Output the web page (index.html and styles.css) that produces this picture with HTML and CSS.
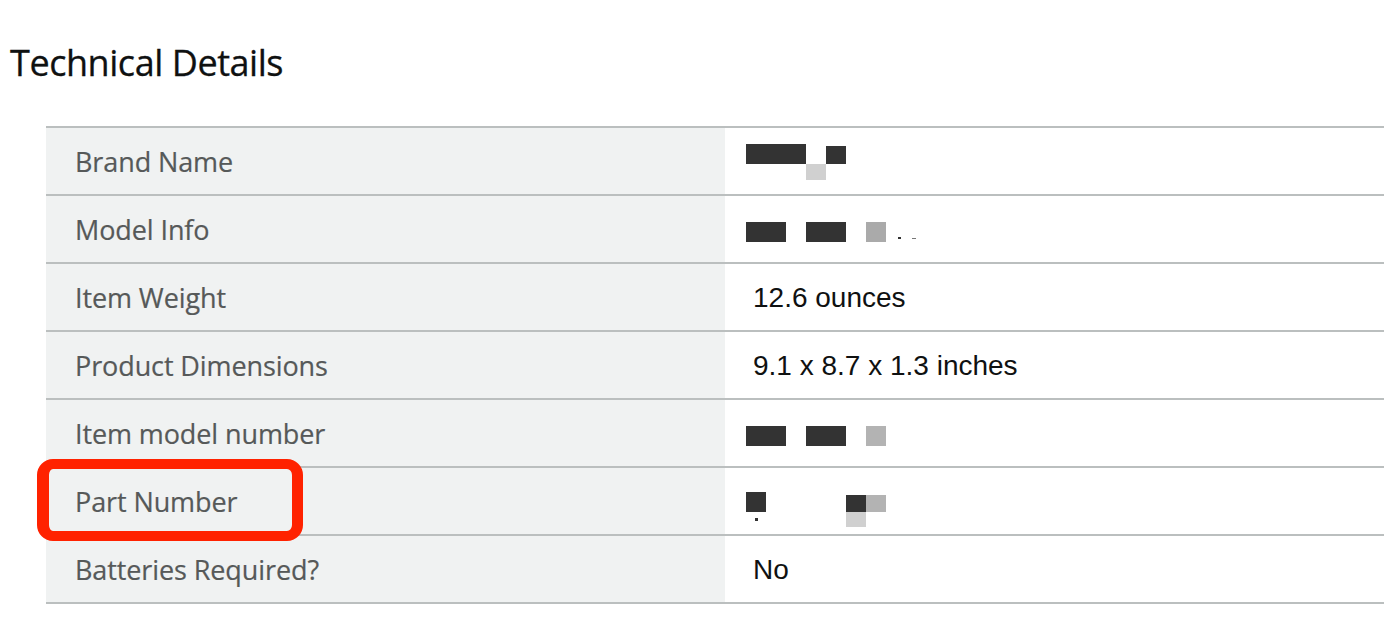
FILE: index.html
```html
<!DOCTYPE html>
<html lang="en">
<head>
<meta charset="utf-8">
<title>Technical Details</title>
<link rel="stylesheet" href="styles.css">
</head>
<body>
<section class="tech">
  <h2 class="tech-title">Technical Details</h2>
  <div class="spec-table">
    <div class="spec-row">
      <div class="spec-label">Brand Name</div>
      <div class="spec-value">
        <div class="redact">
          <span class="blk dark" style="grid-column:1/4;grid-row:1"></span>
          <span class="blk light" style="grid-column:4;grid-row:2"></span>
          <span class="blk dark low" style="grid-column:5;grid-row:1"></span>
        </div>
      </div>
    </div>
    <div class="spec-row">
      <div class="spec-label">Model Info</div>
      <div class="spec-value">
        <div class="redact one">
          <span class="blk dark" style="grid-column:1/3;grid-row:1"></span>
          <span class="blk dark" style="grid-column:4/6;grid-row:1"></span>
          <span class="blk mid" style="grid-column:7;grid-row:1"></span>
          <span class="dots" style="grid-column:8/10;grid-row:1"><i></i><i></i></span>
        </div>
      </div>
    </div>
    <div class="spec-row">
      <div class="spec-label">Item Weight</div>
      <div class="spec-value text">12.6 ounces</div>
    </div>
    <div class="spec-row">
      <div class="spec-label">Product Dimensions</div>
      <div class="spec-value text">9.1 x 8.7 x 1.3 inches</div>
    </div>
    <div class="spec-row">
      <div class="spec-label">Item model number</div>
      <div class="spec-value">
        <div class="redact one">
          <span class="blk dark" style="grid-column:1/3;grid-row:1"></span>
          <span class="blk dark" style="grid-column:4/6;grid-row:1"></span>
          <span class="blk mid2" style="grid-column:7;grid-row:1"></span>
        </div>
      </div>
    </div>
    <div class="spec-row">
      <div class="spec-label highlighted">Part Number<span class="callout"></span></div>
      <div class="spec-value">
        <div class="redact part">
          <span class="blk dark" style="grid-column:1;grid-row:1"></span>
          <span class="dot" style="grid-column:1;grid-row:2"></span>
          <span class="blk dark low" style="grid-column:6;grid-row:1"></span>
          <span class="blk mid2 low" style="grid-column:7;grid-row:1"></span>
          <span class="blk light" style="grid-column:6;grid-row:2"></span>
        </div>
      </div>
    </div>
    <div class="spec-row">
      <div class="spec-label">Batteries Required?</div>
      <div class="spec-value text">No</div>
    </div>
  </div>
</section>
</body>
</html>
```

FILE: styles.css
```css
html, body {
  margin: 0;
  padding: 0;
  background: #ffffff;
}

body {
  width: 1384px;
  height: 642px;
  overflow: hidden;
}

.tech {
  padding-top: 40px;
}

.tech-title {
  margin: 0 0 0 10px;
  font-family: "Open Sans", "Noto Sans", sans-serif;
  font-weight: 400;
  font-size: 36px;
  line-height: 46px;
  color: #0f1111;
  letter-spacing: -0.45px;
  -webkit-text-stroke: 0.3px #0f1111;
}

.spec-table {
  margin: 40px 0 0 46px;
  width: 1400px;
  border-top: 2px solid #bbbfbf;
}

.spec-row {
  display: grid;
  grid-template-columns: 679px 1fr;
  height: 66px;
  border-bottom: 2px solid #bbbfbf;
}

.spec-label {
  position: relative;
  background: #f0f2f2;
  display: flex;
  align-items: center;
  padding-left: 29px;
  font-family: "Open Sans", "Noto Sans", sans-serif;
  font-size: 27px;
  color: #565959;
  letter-spacing: -0.1px;
  -webkit-text-stroke: 0.2px #565959;
}

.spec-value {
  display: flex;
  align-items: center;
  padding-left: 21px;
  font-family: "Liberation Sans", Arial, sans-serif;
  font-size: 28px;
  color: #0f1111;
}

.spec-value.text {
  padding-left: 28px;
  padding-top: 2px;
}

.redact {
  display: grid;
  grid-template-columns: repeat(9, 20px);
  grid-template-rows: 20px 16px;
  margin-top: 2px;
}

.redact.one {
  grid-template-rows: 20px;
  margin-top: 6px;
}

.redact.part {
  grid-template-rows: 20px 15px;
  margin-top: 16px;
}

.blk {
  display: block;
}

.blk.dark {
  background: #333333;
}

.blk.light {
  background: #d0d0d0;
}

.blk.mid {
  background: #aaaaaa;
}

.blk.mid2 {
  background: #b3b3b3;
}

.blk.low {
  margin-top: 2px;
}

.redact.part .blk.low {
  margin-top: 3px;
}

.dots {
  display: flex;
  align-items: flex-end;
  gap: 11px;
  padding-left: 12px;
  padding-bottom: 3px;
}

.dots i {
  display: block;
  width: 3px;
  height: 2px;
  background: #333333;
}

.dots i + i {
  width: 4px;
  height: 1px;
  background: #777777;
}

.dot {
  align-self: start;
  justify-self: center;
  margin-top: 6px;
  width: 3px;
  height: 3px;
  background: #333333;
}

.callout {
  position: absolute;
  z-index: 5;
  left: -9px;
  top: -9px;
  width: 266px;
  height: 82px;
  box-sizing: border-box;
  border: 10px solid #ff2200;
  border-width: 10px 11px 10px 12px;
  border-radius: 16px;
}
```
